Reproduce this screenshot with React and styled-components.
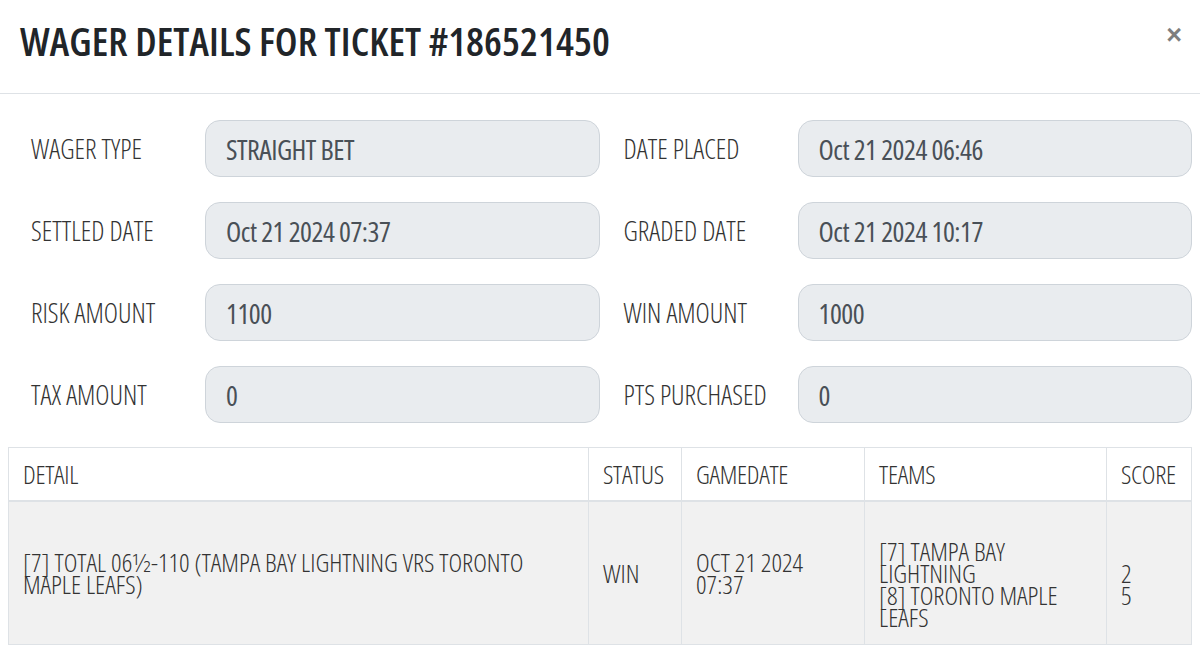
import React from 'react';
import styled, { createGlobalStyle } from 'styled-components';

const Global = createGlobalStyle`
  body {
    margin: 0;
    background: #fff;
    font-family: "Open Sans", "Roboto", sans-serif;
    font-stretch: 75%;
    color: #333;
  }
`;

const Modal = styled.div`
  width: 1200px;
  background: #fff;
`;

const Header = styled.div`
  height: 94px;
  box-sizing: border-box;
  padding: 21px 18px 0 20px;
  display: flex;
  justify-content: space-between;
  align-items: flex-start;
  border-bottom: 1px solid #dee2e6;
`;

const Title = styled.h1`
  margin: 0;
  font-size: 40px;
  line-height: 40px;
  font-weight: 600;
  color: #212529;
  letter-spacing: 0.1px;
`;

const Close = styled.button`
  border: 0;
  background: transparent;
  padding: 0;
  margin-top: 1px;
  font-family: "Liberation Sans", Arial, sans-serif;
  font-stretch: normal;
  font-size: 27px;
  line-height: 27px;
  font-weight: 700;
  color: #000;
  opacity: 0.5;
  cursor: pointer;
`;

const Body = styled.div`
  padding: 26px 0 0 0;
`;

const Form = styled.div`
  display: grid;
  grid-template-columns: 1fr 1fr;
  column-gap: 24px;
  row-gap: 25px;
  padding: 0 8px 0 31px;
  margin-bottom: 24px;
`;

const Field = styled.div`
  display: flex;
  align-items: center;
`;

const Label = styled.div`
  width: 174px;
  flex: none;
  font-size: 27px;
  font-weight: 300;
  color: #333;
`;

const Value = styled.div`
  flex: 1;
  height: 57px;
  box-sizing: border-box;
  display: flex;
  align-items: center;
  padding: 0 20px;
  background: #e9ecef;
  border: 1px solid #ced4da;
  border-radius: 15px;
  font-size: 28px;
  font-weight: 400;
  color: #495057;
  letter-spacing: -0.5px;
`;

const TableWrap = styled.div`
  padding: 0 9px 0 8px;
`;

const Table = styled.table`
  width: 100%;
  border-collapse: collapse;
  table-layout: fixed;
  font-size: 26px;
  font-weight: 300;
  color: #333;
`;

const Th = styled.th`
  box-sizing: border-box;
  width: ${p => p.$w}px;
  text-align: left;
  font-weight: 300;
  padding: 15px 14px;
  line-height: 22px;
  border: 1px solid #dee2e6;
  border-bottom: 2px solid #dee2e6;
  text-transform: uppercase;
  letter-spacing: -0.3px;
  white-space: nowrap;
`;

const Td = styled.td`
  vertical-align: middle;
  padding: ${p => (p.$drop ? '38px' : '16px')} 14px 16px;
  line-height: 22px;
  background: #f1f1f1;
  border: 1px solid #dee2e6;
  text-transform: uppercase;
`;

const Line = styled.div`
  white-space: nowrap;
`;

const fields = [
  ['WAGER TYPE', 'STRAIGHT BET'],
  ['DATE PLACED', 'Oct 21 2024 06:46'],
  ['SETTLED DATE', 'Oct 21 2024 07:37'],
  ['GRADED DATE', 'Oct 21 2024 10:17'],
  ['RISK AMOUNT', '1100'],
  ['WIN AMOUNT', '1000'],
  ['TAX AMOUNT', '0'],
  ['PTS PURCHASED', '0'],
];

const columns = [
  ['Detail', 580],
  ['Status', 93],
  ['Gamedate', 183],
  ['Teams', 242],
  ['Score', 85],
];

export default function App() {
  return (
    <Modal>
      <Global />
      <Header>
        <Title>WAGER DETAILS FOR TICKET #186521450</Title>
        <Close aria-label="Close">×</Close>
      </Header>
      <Body>
        <Form>
          {fields.map(([label, value]) => (
            <Field key={label}>
              <Label>{label}</Label>
              <Value>{value}</Value>
            </Field>
          ))}
        </Form>
        <TableWrap>
          <Table>
            <thead>
              <tr>
                {columns.map(([name, w]) => (
                  <Th key={name} $w={w}>{name}</Th>
                ))}
              </tr>
            </thead>
            <tbody>
              <tr>
                <Td>
                  <Line>[7] Total 06½-110 (Tampa Bay Lightning vrs Toronto</Line>
                  <Line>Maple Leafs)</Line>
                </Td>
                <Td>Win</Td>
                <Td>
                  <Line>Oct 21 2024</Line>
                  <Line>07:37</Line>
                </Td>
                <Td $drop>
                  <Line>[7] Tampa Bay</Line>
                  <Line>Lightning</Line>
                  <Line>[8] Toronto Maple</Line>
                  <Line>Leafs</Line>
                </Td>
                <Td $drop>
                  <Line>2</Line>
                  <Line>5</Line>
                </Td>
              </tr>
            </tbody>
          </Table>
        </TableWrap>
      </Body>
    </Modal>
  );
}
